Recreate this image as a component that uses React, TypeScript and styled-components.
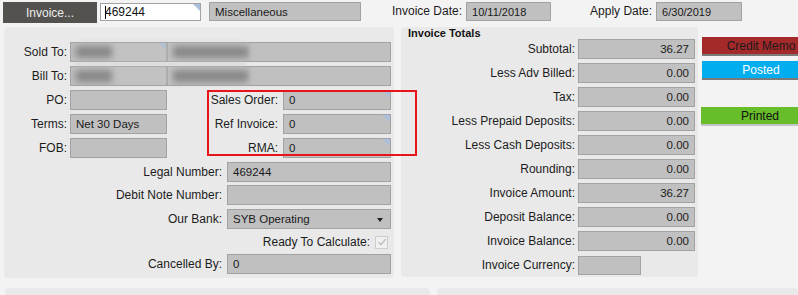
import { FC, ReactElement } from 'react'
import styled, { createGlobalStyle, css } from 'styled-components'

const GlobalStyle = createGlobalStyle`
  html, body {
    margin: 0;
    padding: 0;
    background: #f3f3f4;
    overflow: hidden;
  }
  body {
    font-family: 'Liberation Sans', Arial, sans-serif;
    font-size: 12px;
    color: #1c1c1c;
  }
`

const totals: Array<[string, string]> = [
  ['Subtotal:', '36.27'],
  ['Less Adv Billed:', '0.00'],
  ['Tax:', '0.00'],
  ['Less Prepaid Deposits:', '0.00'],
  ['Less Cash Deposits:', '0.00'],
  ['Rounding:', '0.00'],
  ['Invoice Amount:', '36.27'],
  ['Deposit Balance:', '0.00'],
  ['Invoice Balance:', '0.00']
]

const Smudge: FC<{ w: number }> = ({ w }) => <Blur style={{ width: w }} />

const App: FC = (): ReactElement => {
  return (
    <Page>
      <GlobalStyle />
      <TopBar>
        <InvoiceButton>Invoice...</InvoiceButton>
        <NumberInput>
          <Caret />469244
          <Corner />
        </NumberInput>
        <Field $w={152} $h={19}>Miscellaneous</Field>
        <TopLabel $ml={31}>Invoice Date:</TopLabel>
        <Field $w={85} $h={19} $small>10/11/2018</Field>
        <TopLabel $ml={39}>Apply Date:</TopLabel>
        <Field $w={86} $h={19} $small>6/30/2019</Field>
      </TopBar>

      <Main>
        <LeftPanel>
          <Highlight />
          <Redaction />
          <Row>
            <Label $w={66}>Sold To:</Label>
            <Field $w={97}>
              <Smudge w={36} />
              <Corner />
            </Field>
            <Field $w={224}>
              <Smudge w={74} />
            </Field>
          </Row>
          <Row>
            <Label $w={66}>Bill To:</Label>
            <Field $w={97}>
              <Smudge w={36} />
            </Field>
            <Field $w={224}>
              <Smudge w={74} />
            </Field>
          </Row>
          <Row>
            <Label $w={66}>PO:</Label>
            <Field $w={97} />
            <Label $w={116} $pr={5}>Sales Order:</Label>
            <Field $w={108}>0<Corner /></Field>
          </Row>
          <Row>
            <Label $w={66}>Terms:</Label>
            <Field $w={97}>Net 30 Days</Field>
            <Label $w={116} $pr={5}>Ref Invoice:</Label>
            <Field $w={108}>0<Corner /></Field>
          </Row>
          <Row>
            <Label $w={66}>FOB:</Label>
            <Field $w={97} />
            <Label $w={116} $pr={5}>RMA:</Label>
            <Field $w={108}>0<Corner /></Field>
          </Row>
          <Row>
            <Label $w={223} $pr={5}>Legal Number:</Label>
            <Field $w={164}>469244</Field>
          </Row>
          <Row $mt={3}>
            <Label $w={223} $pr={5}>Debit Note Number:</Label>
            <Field $w={164} />
          </Row>
          <Row>
            <Label $w={223} $pr={5}>Our Bank:</Label>
            <Field $w={164}>
              SYB Operating
              <DropArrow />
            </Field>
          </Row>
          <Row $mt={3}>
            <Label $w={371} $pr={5}>Ready To Calculate:</Label>
            <Check>
              <svg width='10' height='10' viewBox='0 0 10 10'>
                <path d='M1.5 5.2 L4 7.6 L8.6 2.2' fill='none' stroke='#b8b8b8' strokeWidth='1.2' />
              </svg>
            </Check>
          </Row>
          <Row $mt={2}>
            <Label $w={223} $pr={5}>Cancelled By:</Label>
            <Field $w={164}>0</Field>
          </Row>
        </LeftPanel>

        <RightPanel>
          <PanelTitle>Invoice Totals</PanelTitle>
          {totals.map(([label, value]) => (
            <Row key={label}>
              <Label $w={177}>{label}</Label>
              <Field $w={117} $right>{value}</Field>
            </Row>
          ))}
          <Row>
            <Label $w={177}>Invoice Currency:</Label>
            <Field $w={63} $h={19} />
          </Row>
        </RightPanel>

        <StatusColumn>
          <StatusBadge $bg='#a3292b' $fg='#1a1a1a'>Credit Memo</StatusBadge>
          <StatusBadge $bg='#00adef' $fg='#ffffff' $mt={5}>Posted</StatusBadge>
          <StatusBadge $bg='#67bd2a' $fg='#111111' $mt={27} $ml={-1} $line='#c4c4c4'>Printed</StatusBadge>
        </StatusColumn>
      </Main>

      <BottomRow>
        <BottomPanel $w={425} />
        <BottomPanel />
      </BottomRow>
    </Page>
  )
}

const Page = styled.div`
  width: 798px;
  height: 295px;
  overflow: hidden;
`
const TopBar = styled.div`
  display: flex;
  align-items: flex-start;
  height: 27px;
  padding: 2px 0 0 3px;
  box-sizing: border-box;
`
const InvoiceButton = styled.div`
  width: 94px;
  height: 21px;
  flex: none;
  background: #54524f;
  color: #ececec;
  font-size: 12px;
  display: flex;
  align-items: center;
  justify-content: center;
`
const NumberInput = styled.div`
  position: relative;
  width: 101px;
  height: 18px;
  flex: none;
  margin: 1px 8px 0 3px;
  box-sizing: border-box;
  background: #ffffff;
  border: 1px solid #a3a3a3;
  display: flex;
  align-items: center;
  padding-left: 4px;
  font-size: 12px;
  color: #111;
`
const Caret = styled.span`
  display: inline-block;
  width: 1px;
  height: 13px;
  background: #000;
  margin-right: -1px;
`
const Corner = styled.span`
  position: absolute;
  top: 0;
  right: 0;
  width: 0;
  height: 0;
  border-top: 7px solid #a9bfdc;
  border-left: 7px solid transparent;
`
const TopLabel = styled.div<{ $ml: number }>`
  margin-left: ${p => p.$ml}px;
  margin-right: 4px;
  height: 19px;
  line-height: 19px;
  font-size: 12px;
  flex: none;
`
const Field = styled.div<{ $w: number, $h?: number, $right?: boolean, $small?: boolean }>`
  position: relative;
  width: ${p => p.$w}px;
  height: ${p => p.$h ?? 20}px;
  flex: none;
  box-sizing: border-box;
  background: #c0c0c0;
  border: 1px solid #a2a2a2;
  display: flex;
  align-items: center;
  padding: 0 5px;
  font-size: ${p => (p.$small ? 11 : 11.5)}px;
  color: #1a1a1a;
  overflow: hidden;
  white-space: nowrap;
  ${p => p.$right && css`
    justify-content: flex-end;
  `}
`
const Blur = styled.span`
  display: block;
  height: 12px;
  background: #6e6e6e;
  filter: blur(3px);
`
const Redaction = styled.div`
  position: absolute;
  left: 70px;
  top: 15px;
  width: 172px;
  height: 42px;
  background: rgba(200, 200, 200, 0.3);
  filter: blur(2px);
  pointer-events: none;
  z-index: 1;
`
const DropArrow = styled.span`
  position: absolute;
  right: 7px;
  top: 8px;
  border-top: 4px solid #222;
  border-left: 3px solid transparent;
  border-right: 3px solid transparent;
`
const Main = styled.div`
  display: flex;
  align-items: flex-start;
`
const LeftPanel = styled.div`
  position: relative;
  flex: none;
  margin-left: 4px;
  width: 390px;
  height: 251px;
  box-sizing: border-box;
  padding-top: 15px;
  background: #e9e9e9;
  border-radius: 4px;
  display: flex;
  flex-direction: column;
  gap: 4px;
`
const Highlight = styled.div`
  position: absolute;
  left: 203px;
  top: 63px;
  width: 210px;
  height: 66px;
  box-sizing: border-box;
  border: 2px solid #e8141b;
  pointer-events: none;
  z-index: 2;
`
const Row = styled.div<{ $mt?: number }>`
  display: flex;
  align-items: center;
  height: 20px;
  ${p => p.$mt !== undefined && css`
    margin-top: ${p.$mt - 4}px;
  `}
`
const Label = styled.div<{ $w: number, $pr?: number }>`
  width: ${p => p.$w}px;
  flex: none;
  box-sizing: border-box;
  padding-right: ${p => p.$pr ?? 3}px;
  text-align: right;
  font-size: 12px;
  color: #1c1c1c;
  white-space: nowrap;
`
const Check = styled.div`
  width: 13px;
  height: 13px;
  flex: none;
  box-sizing: border-box;
  border: 1px solid #cdcdcd;
  background: #f0f0f0;
  display: flex;
  align-items: center;
  justify-content: center;
`
const RightPanel = styled.div`
  flex: none;
  margin-left: 7px;
  width: 297px;
  height: 250px;
  box-sizing: border-box;
  background: #e9e9e9;
  border-radius: 4px;
  display: flex;
  flex-direction: column;
  gap: 4px;
`
const PanelTitle = styled.div`
  height: 12px;
  line-height: 12px;
  margin-bottom: -4px;
  padding-left: 7px;
  font-size: 11px;
  font-weight: bold;
  color: #141414;
`
const StatusColumn = styled.div`
  flex: none;
  margin-left: 4px;
  padding-top: 10px;
  display: flex;
  flex-direction: column;
`
const StatusBadge = styled.div<{ $bg: string, $fg: string, $mt?: number, $ml?: number, $line?: string }>`
  width: 118px;
  height: 19px;
  box-sizing: border-box;
  margin-top: ${p => p.$mt ?? 0}px;
  margin-left: ${p => p.$ml ?? 0}px;
  background: ${p => p.$bg};
  color: ${p => p.$fg};
  border-bottom: 2px solid ${p => p.$line ?? '#7a7a7a'};
  font-size: 12px;
  display: flex;
  align-items: center;
  justify-content: center;
`
const BottomRow = styled.div`
  display: flex;
  gap: 7px;
  margin-top: 10px;
  padding-left: 5px;
`
const BottomPanel = styled.div<{ $w?: number }>`
  ${p => (p.$w ? css`width: ${p.$w}px; flex: none;` : css`flex: 1;`)}
  height: 20px;
  background: #e9e9e9;
  border-radius: 4px;
`

export default App
